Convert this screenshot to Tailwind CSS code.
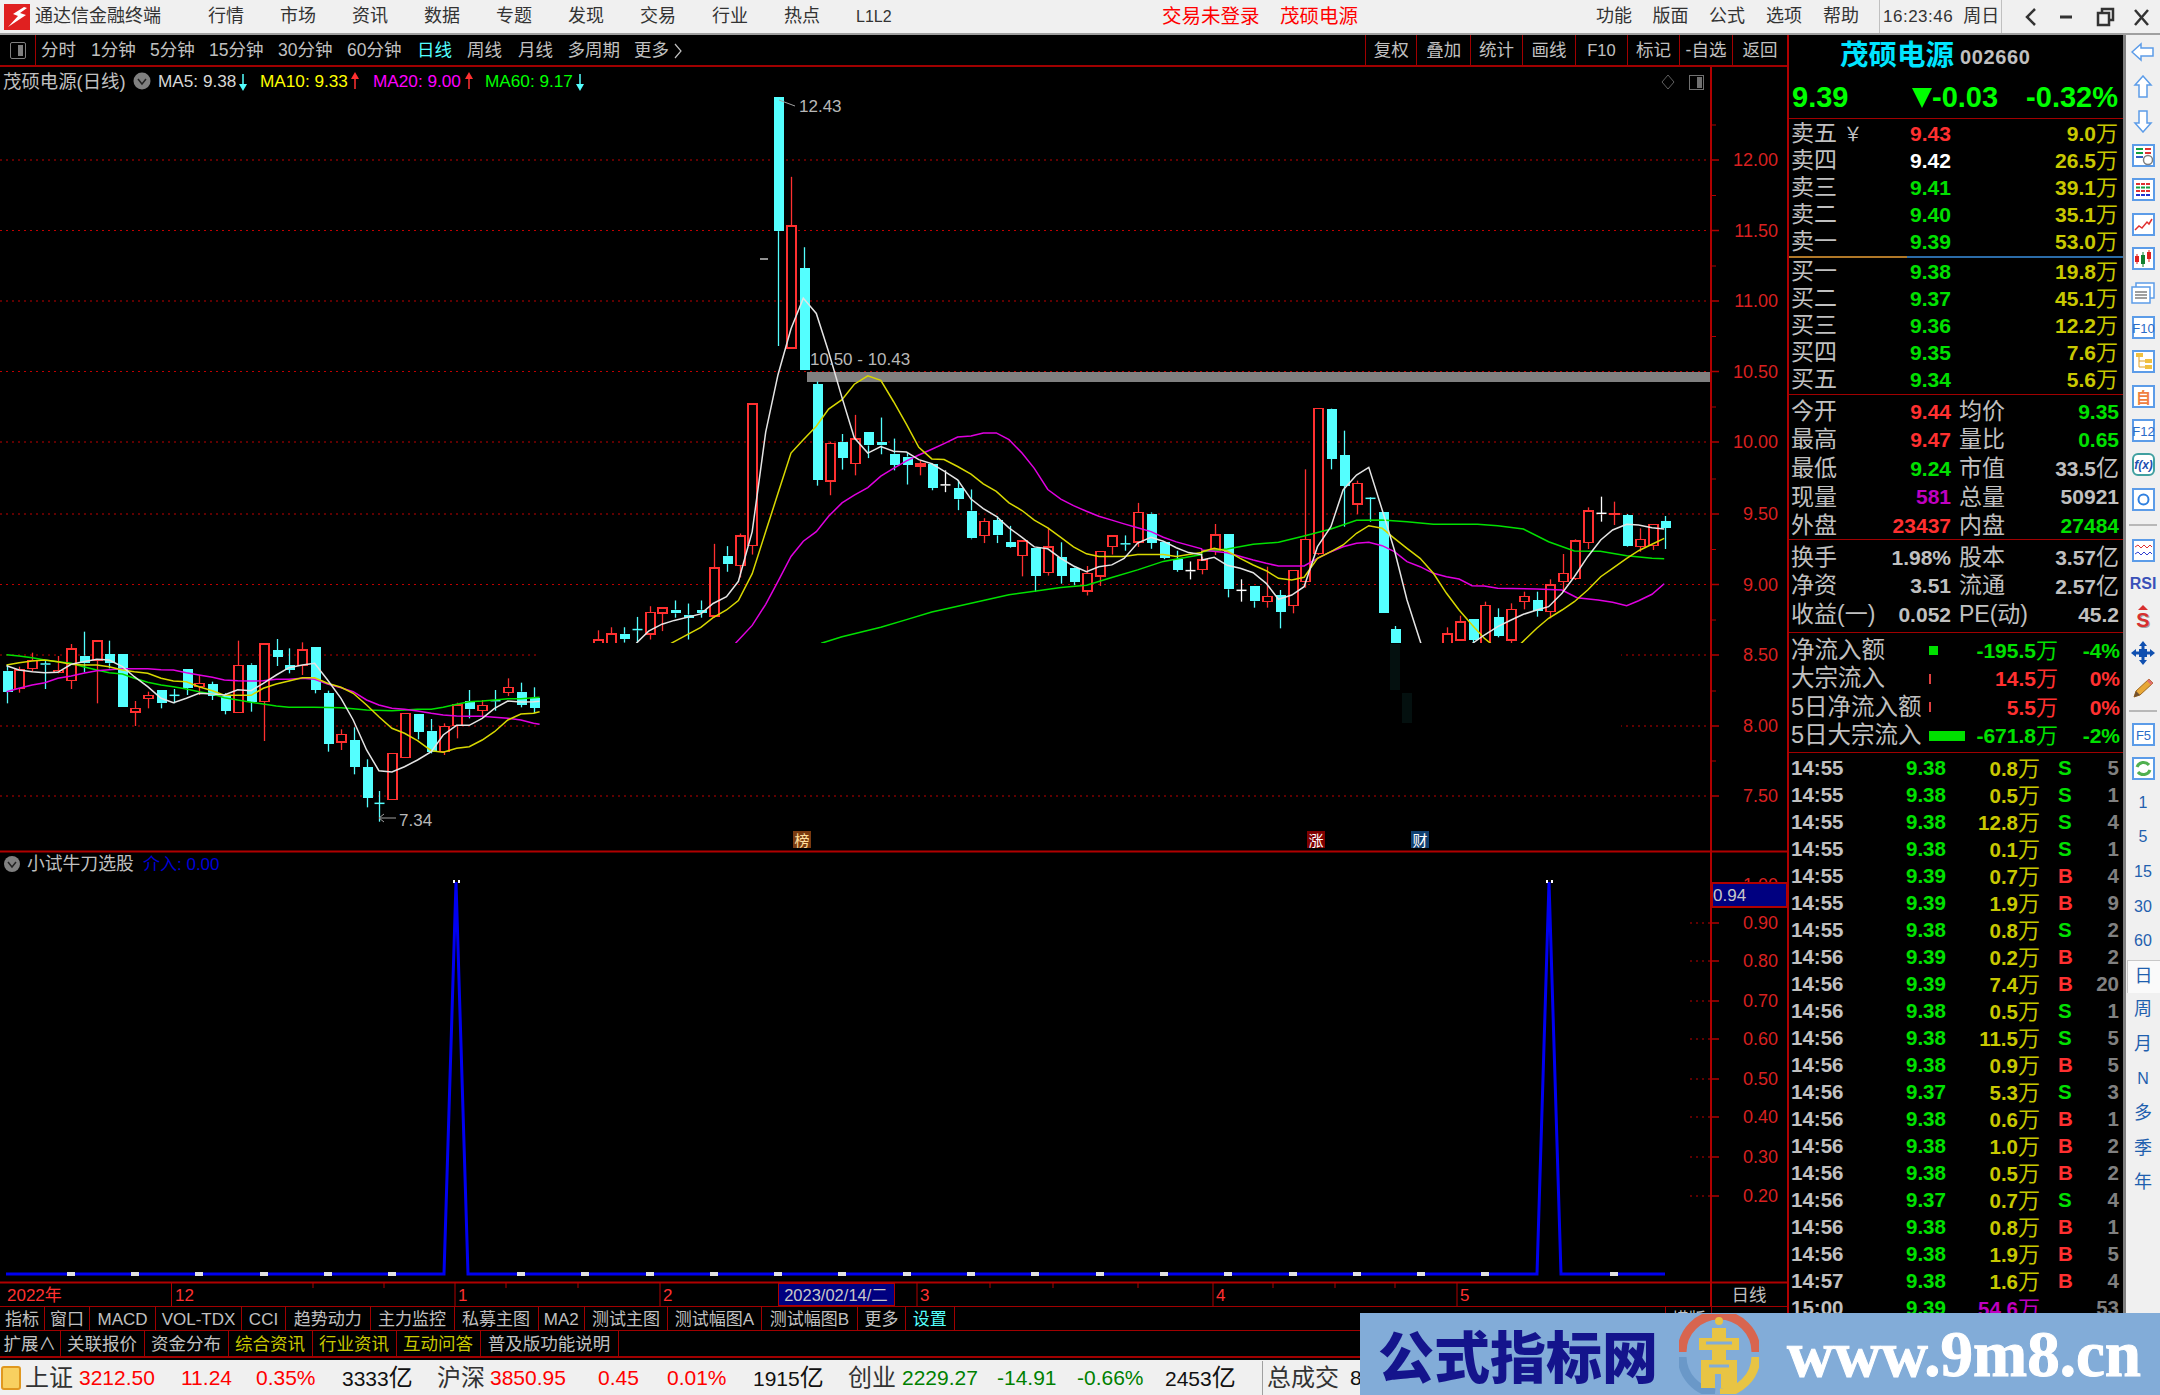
<!DOCTYPE html>
<html lang="zh">
<head>
  <meta charset="UTF-8">
  <title>通达信金融终端</title>
  <script src="https://cdn.jsdelivr.net/npm/@tailwindcss/browser@4"></script>
</head>
<body class="bg-black">
<div class="relative w-[2160px] h-[1395px] overflow-hidden flex flex-col font-['Liberation_Sans','Noto_Sans_CJK_SC',sans-serif]">

  <!-- title bar -->
  <div class="h-[35px] shrink-0 flex items-center bg-[#f0f0f0] border-b-2 border-[#a0a0a0] text-[#333333] text-[18px]">
    <svg class="w-[26px] h-[26px] ml-[4px] mr-[5px] shrink-0" viewBox="0 0 26 26">
      <rect width="26" height="26" fill="#e02020"/>
      <path d="M20 3 L9 10 L14 12 L4 23 L22 11 L16 9 L23 4 Z" fill="#ffffff"/>
    </svg>
    <span class="w-[173px] shrink-0">通达信金融终端</span>
    <span class="w-[72px] shrink-0">行情</span>
    <span class="w-[72px] shrink-0">市场</span>
    <span class="w-[72px] shrink-0">资讯</span>
    <span class="w-[72px] shrink-0">数据</span>
    <span class="w-[72px] shrink-0">专题</span>
    <span class="w-[72px] shrink-0">发现</span>
    <span class="w-[72px] shrink-0">交易</span>
    <span class="w-[72px] shrink-0">行业</span>
    <span class="w-[72px] shrink-0">热点</span>
    <span class="w-[306px] shrink-0 text-[16px]">L1L2</span>
    <span class="w-[118px] shrink-0 text-[19.5px] text-[#ff0000]">交易未登录</span>
    <span class="w-[316px] shrink-0 text-[19.5px] text-[#ff0000]">茂硕电源</span>
    <span class="w-[56.5px] shrink-0">功能</span>
    <span class="w-[56.5px] shrink-0">版面</span>
    <span class="w-[57px] shrink-0">公式</span>
    <span class="w-[57px] shrink-0">选项</span>
    <span class="w-[56px] shrink-0">帮助</span>
    <div class="w-[123px] h-full shrink-0 flex items-center gap-[10px] border-x border-[#c0c0c0] pl-[3px]">
      <span class="text-[17px] tracking-[0.5px]">16:23:46</span><span>周日</span>
    </div>
    <svg class="w-[158px] h-[26px] shrink-0" viewBox="0 0 158 26" fill="none" stroke="#333333" stroke-width="2.5">
      <path d="M33 5 L25 13 L33 21"/>
      <path d="M58 13 H70" stroke-width="3"/>
      <rect x="96" y="9" width="11" height="12"/><path d="M100 9 V5 H111 V16 H107"/>
      <path d="M133 6 L146 21 M146 6 L133 21"/>
    </svg>
  </div>

  <div class="flex-1 flex min-h-0">
    <!-- left column -->
    <div class="w-[1787px] shrink-0 flex flex-col">
      <!-- period toolbar -->
      <div class="h-[32px] shrink-0 flex items-center border-b-2 border-[#a00000] text-[17.5px] text-[#c0c0c0]">
        <div class="w-[36px] h-full shrink-0 flex items-center justify-center border-r border-[#a00000]">
          <div class="w-[16px] h-[17px] flex justify-end border border-[#808080] rounded-[2px] p-[2px]"><div class="w-[5px] bg-[#808080]"></div></div>
        </div>
        <div class="w-[55px] shrink-0 pl-[5px] pt-[1px]">分时</div>
        <div class="w-[59px] shrink-0 pt-[1px]">1分钟</div>
        <div class="w-[59px] shrink-0 pt-[1px]">5分钟</div>
        <div class="w-[69px] shrink-0 pt-[1px]">15分钟</div>
        <div class="w-[69px] shrink-0 pt-[1px]">30分钟</div>
        <div class="w-[70px] shrink-0 pt-[1px]">60分钟</div>
        <div class="w-[50px] shrink-0 pt-[1px] text-[#54ffff]">日线</div>
        <div class="w-[51px] shrink-0 pt-[1px]">周线</div>
        <div class="w-[49.6px] shrink-0 pt-[1px]">月线</div>
        <div class="w-[66.4px] shrink-0 pt-[1px]">多周期</div>
        <div class="w-[731px] shrink-0 pt-[1px] flex items-center gap-[5px]">更多<svg width="8" height="16" viewBox="0 0 8 16" fill="none" stroke="#c0c0c0" stroke-width="1.2"><path d="M1 1 L7 8 L1 15"/></svg></div>
        <div class="w-[51.5px] h-full shrink-0 flex items-center justify-center border-l border-[#a00000]">复权</div>
        <div class="w-[53.5px] h-full shrink-0 flex items-center justify-center border-l border-[#a00000]">叠加</div>
        <div class="w-[52px] h-full shrink-0 flex items-center justify-center border-l border-[#a00000]">统计</div>
        <div class="w-[53px] h-full shrink-0 flex items-center justify-center border-l border-[#a00000]">画线</div>
        <div class="w-[52px] h-full shrink-0 flex items-center justify-center border-l border-[#a00000] text-[16.5px]">F10</div>
        <div class="w-[52px] h-full shrink-0 flex items-center justify-center border-l border-[#a00000]">标记</div>
        <div class="w-[53px] h-full shrink-0 flex items-center justify-center border-l border-[#a00000]">-自选</div>
        <div class="w-[55px] h-full shrink-0 flex items-center justify-center border-l border-[#a00000]">返回</div>
      </div>

      <!-- kline + indicator canvas, coordinates are page pixels -->
      <svg id="chart" class="w-[1787px] h-[1239px] shrink-0 block" viewBox="0 67 1787 1239"></svg>

      <!-- function tabs -->
      <div id="tabs1" class="h-[25px] shrink-0 flex items-center border-y border-[#a00000] text-[17px] text-[#c0c0c0]"></div>
      <div id="tabs2" class="h-[27px] shrink-0 flex items-center border-b-2 border-[#a00000] text-[17.5px] text-[#c0c0c0]"></div>
      <div class="h-[2px] shrink-0 bg-black"></div>
    </div>

    <!-- quote panel -->
    <div class="w-[339px] shrink-0 flex flex-col border-l-2 border-r-[3px] border-l-[#b00000] border-r-[#808080] text-[#c0c0c0] overflow-hidden">
      <div class="h-[40px] shrink-0 flex items-center pl-[51px] gap-[6px]">
        <span class="text-[28.5px] font-bold text-[#00e4ff]">茂硕电源</span>
        <span class="text-[20px] font-bold tracking-[0.6px] mt-[4px]">002660</span>
      </div>
      <div class="h-[44px] shrink-0 flex items-center text-[#00ff00] font-bold text-[29px] border-b border-[#a00000] pt-[2px]">
        <span class="w-[123px] shrink-0 pl-[3px]">9.39</span>
        <svg class="w-[20px] h-[20px] shrink-0" viewBox="0 0 20 20"><path d="M0 0 H20 L10 20 Z" fill="#00ff00"/></svg>
        <span class="w-[88px] shrink-0">-0.03</span>
        <span class="flex-1 text-right pr-[5px]">-0.32%</span>
      </div>
      <div id="orders"></div>
      <div id="stats1" class="h-[146px] shrink-0 border-y border-[#a00000] pt-[2px]"></div>
      <div id="stats2" class="h-[93px] shrink-0 border-b border-[#a00000] pt-[3px]"></div>
      <div id="flows" class="h-[120px] shrink-0 border-b border-[#a00000] pt-[3px]"></div>
      <div id="ticks" class="pt-[2px]"></div>
    </div>

    <!-- right toolbar -->
    <div class="w-[34px] shrink-0 bg-[#f0f0f0] flex flex-col items-center text-[#1f5fae]">
      <div class="h-[34.4px] flex items-center"><svg width="24" height="20" viewBox="0 0 24 20"><path d="M1 10 L10 2 V6 H22 V14 H10 V18 Z" fill="#fff" stroke="#5c9ce8" stroke-width="1.5"/></svg></div>
      <div class="h-[34.4px] flex items-center"><svg width="20" height="24" viewBox="0 0 20 24"><path d="M10 1 L18 10 H14 V22 H6 V10 H2 Z" fill="#fff" stroke="#5c9ce8" stroke-width="1.5"/></svg></div>
      <div class="h-[34.4px] flex items-center"><svg width="20" height="24" viewBox="0 0 20 24"><path d="M10 23 L18 14 H14 V2 H6 V14 H2 Z" fill="#fff" stroke="#5c9ce8" stroke-width="1.5"/></svg></div>
      <div class="h-[34.4px] flex items-center"><svg width="23" height="23" viewBox="0 0 23 23"><rect x="1" y="1" width="21" height="21" fill="#fff" stroke="#5c9ce8" stroke-width="2"/><path d="M4 5 H11 M4 9 H11" stroke="#10a040" stroke-width="2"/><path d="M4 13 H11" stroke="#3060c0" stroke-width="2"/><path d="M13 5 H19 M13 9 H19" stroke="#e03030" stroke-width="2"/><circle cx="16" cy="16" r="4.5" fill="#fff" stroke="#808080" stroke-width="1.5"/></svg></div>
      <div class="h-[34.4px] flex items-center"><svg width="23" height="23" viewBox="0 0 23 23"><rect x="1" y="1" width="21" height="21" fill="#fff" stroke="#5c9ce8" stroke-width="2"/><path d="M4 6 H19 M4 13 H19" stroke="#e03030" stroke-width="2" stroke-dasharray="4 1"/><path d="M4 9.5 H19" stroke="#10a040" stroke-width="2" stroke-dasharray="4 1"/><path d="M4 17 H19" stroke="#2030d0" stroke-width="2" stroke-dasharray="4 1"/></svg></div>
      <div class="h-[34.4px] flex items-center"><svg width="23" height="23" viewBox="0 0 23 23"><rect x="1" y="1" width="21" height="21" fill="#fff" stroke="#5c9ce8" stroke-width="2"/><path d="M3 17 L7 13 L10 15 L15 9 L17 11 L20 6" fill="none" stroke="#e03030" stroke-width="1.5"/></svg></div>
      <div class="h-[34.4px] flex items-center"><svg width="23" height="23" viewBox="0 0 23 23"><rect x="1" y="1" width="21" height="21" fill="#fff" stroke="#5c9ce8" stroke-width="2"/><path d="M5 7 V17 M17 3 V15" stroke="#e02020"/><path d="M11 5 V20" stroke="#108030"/><rect x="3" y="9" width="4" height="6" fill="#e02020"/><rect x="9" y="8" width="4" height="9" fill="#108030"/><rect x="15" y="5" width="4" height="7" fill="#e02020"/></svg></div>
      <div class="h-[34.4px] flex items-center"><svg width="24" height="22" viewBox="0 0 24 22" fill="#fff" stroke="#5c9ce8" stroke-width="1.5"><rect x="5" y="1" width="18" height="15"/><rect x="1" y="5" width="18" height="16"/><path d="M4 10 H16 M4 13 H16 M4 16 H16" stroke="#808080"/></svg></div>
      <div class="h-[34.4px] flex items-center"><svg width="23" height="23" viewBox="0 0 23 23"><rect x="1" y="1" width="21" height="21" fill="#fff" stroke="#5c9ce8" stroke-width="2"/><text x="11.5" y="16.5" font-size="13" text-anchor="middle" fill="#2a6cc8">F10</text></svg></div>
      <div class="h-[34.4px] flex items-center"><svg width="23" height="23" viewBox="0 0 23 23"><rect x="1" y="1" width="21" height="21" fill="#fff" stroke="#5c9ce8" stroke-width="2"/><path d="M7 6 V17 H13 M7 11 H13" fill="none" stroke="#e0a020"/><rect x="4" y="3" width="7" height="4" fill="#f0c040"/><rect x="13" y="9" width="7" height="4" fill="#f0c040"/><rect x="13" y="15" width="7" height="4" fill="#f0c040"/></svg></div>
      <div class="h-[34.4px] flex items-center"><svg width="23" height="23" viewBox="0 0 23 23"><rect x="1" y="1" width="21" height="21" fill="#fff" stroke="#5c9ce8" stroke-width="2"/><text x="11.5" y="17.5" font-size="15" font-weight="bold" text-anchor="middle" fill="#f08040">自</text></svg></div>
      <div class="h-[34.4px] flex items-center"><svg width="23" height="23" viewBox="0 0 23 23"><rect x="1" y="1" width="21" height="21" fill="#fff" stroke="#5c9ce8" stroke-width="2"/><text x="11.5" y="16.5" font-size="13" text-anchor="middle" fill="#2a6cc8">F12</text></svg></div>
      <div class="h-[34.4px] flex items-center"><svg width="23" height="23" viewBox="0 0 23 23"><rect x="1" y="1" width="21" height="21" rx="5" fill="#fff" stroke="#40a0a0" stroke-width="2"/><text x="11.5" y="16" font-size="12" font-style="italic" font-weight="bold" text-anchor="middle" fill="#2050b0">f(x)</text></svg></div>
      <div class="h-[34.4px] flex items-center"><svg width="23" height="23" viewBox="0 0 23 23"><rect x="1" y="1" width="21" height="21" fill="#fff" stroke="#5c9ce8" stroke-width="2"/><circle cx="11.5" cy="11.5" r="5" fill="none" stroke="#3080e0" stroke-width="2"/></svg></div>
      <div class="h-[16.4px] shrink-0 flex items-center"><div class="w-[28px] h-[2px] bg-[#b8b8b8]"></div></div>
      <div class="h-[34.4px] flex items-center"><svg width="23" height="23" viewBox="0 0 23 23"><rect x="1" y="1" width="21" height="21" fill="#fff" stroke="#5c9ce8" stroke-width="2"/><path d="M3 8 L6 6 L9 9 L12 6 L15 9 L18 6 L20 8" fill="none" stroke="#e03030"/><path d="M3 15 L6 13 L9 16 L12 13 L15 16 L18 13 L20 15" fill="none" stroke="#3040d0"/></svg></div>
      <div class="h-[34.4px] flex items-center font-bold text-[16px] text-[#3a50b8]">RSI</div>
      <div class="h-[34.4px] flex items-center"><svg width="20" height="30" viewBox="0 0 20 30"><path d="M10 1 L15 6 H5 Z" fill="#d83030"/><text x="11" y="24" font-size="20" font-weight="bold" text-anchor="middle" fill="#a0a0a0">S</text><text x="10" y="23" font-size="20" font-weight="bold" text-anchor="middle" fill="#d83030">S</text></svg></div>
      <div class="h-[34.4px] flex items-center"><svg width="24" height="24" viewBox="0 0 24 24" fill="#1050b0"><path d="M12 0 L16 5 H8 Z M12 24 L16 19 H8 Z M0 12 L5 8 V16 Z M24 12 L19 8 V16 Z"/><rect x="8" y="8" width="8" height="8"/><path d="M12 4 V20 M4 12 H20" stroke="#1050b0" stroke-width="3"/></svg></div>
      <div class="h-[34.4px] flex items-center"><svg width="24" height="24" viewBox="0 0 24 24"><path d="M3 21 L5 15 L18 3 L22 7 L9 19 Z" fill="#e8a838" stroke="#a06820"/><path d="M3 21 L5 15 L9 19 Z" fill="#705030"/><path d="M18 3 L22 7 L20 9 L16 5 Z" fill="#e07070"/></svg></div>
      <div class="h-[12px] shrink-0 flex items-center"><div class="w-[28px] h-[2px] bg-[#b8b8b8]"></div></div>
      <div class="h-[34.4px] flex items-center"><svg width="23" height="23" viewBox="0 0 23 23"><rect x="1" y="1" width="21" height="21" fill="#fff" stroke="#5c9ce8" stroke-width="2"/><text x="11.5" y="16.5" font-size="13" text-anchor="middle" fill="#2a6cc8">F5</text></svg></div>
      <div class="h-[34.4px] flex items-center"><svg width="23" height="23" viewBox="0 0 23 23"><rect x="1" y="1" width="21" height="21" fill="#fff" stroke="#5c9ce8" stroke-width="2"/><path d="M5 10 A7 7 0 0 1 17 8 M18 13 A7 7 0 0 1 6 15" fill="none" stroke="#50b050" stroke-width="3"/></svg></div>
      <div class="h-[34.6px] flex items-center text-[16px]">1</div>
      <div class="h-[34.6px] flex items-center text-[16px]">5</div>
      <div class="h-[34.6px] flex items-center text-[16px]">15</div>
      <div class="h-[34.6px] flex items-center text-[16px]">30</div>
      <div class="h-[34.6px] flex items-center text-[16px]">60</div>
      <div class="h-[33px] w-[33px] mt-[1px] flex items-center justify-center text-[18px] bg-[#fafafa] border-t border-l border-[#c8c8c8]">日</div>
      <div class="h-[34.6px] flex items-center text-[18px]">周</div>
      <div class="h-[34.6px] flex items-center text-[18px]">月</div>
      <div class="h-[34.6px] flex items-center text-[16px]">N</div>
      <div class="h-[34.6px] flex items-center text-[18px]">多</div>
      <div class="h-[34.6px] flex items-center text-[18px]">季</div>
      <div class="h-[34.6px] flex items-center text-[18px]">年</div>
    </div>
  </div>

  <!-- index strip -->
  <div class="h-[35px] shrink-0 flex items-center bg-[#f0f0f0] text-[21px] font-medium whitespace-nowrap pt-[1px]">
    <div class="w-[25px] shrink-0 pl-[1px]"><div class="w-[20px] h-[24px] rounded-[3px] border-2 border-[#e09820] bg-[#f8d060]"></div></div>
    <div class="w-[54px] shrink-0 text-[24px] font-normal text-[#333333]">上证</div>
    <div class="w-[102px] shrink-0 text-[#ff0000]">3212.50</div>
    <div class="w-[75px] shrink-0 text-[#ff0000]">11.24</div>
    <div class="w-[86px] shrink-0 text-[#ff0000]">0.35%</div>
    <div class="w-[95px] shrink-0 text-[#111111]">3333<span class="text-[24px] font-normal">亿</span></div>
    <div class="w-[53px] shrink-0 text-[24px] font-normal text-[#333333]">沪深</div>
    <div class="w-[108px] shrink-0 text-[#ff0000]">3850.95</div>
    <div class="w-[69px] shrink-0 text-[#ff0000]">0.45</div>
    <div class="w-[86px] shrink-0 text-[#ff0000]">0.01%</div>
    <div class="w-[95px] shrink-0 text-[#111111]">1915<span class="text-[24px] font-normal">亿</span></div>
    <div class="w-[54px] shrink-0 text-[24px] font-normal text-[#333333]">创业</div>
    <div class="w-[95px] shrink-0 text-[#008000]">2229.27</div>
    <div class="w-[80px] shrink-0 text-[#008000]">-14.91</div>
    <div class="w-[88px] shrink-0 text-[#008000]">-0.66%</div>
    <div class="w-[97px] shrink-0 text-[#111111]">2453<span class="text-[24px] font-normal">亿</span></div>
    <div class="w-[88px] shrink-0 h-full flex items-center border-l border-[#a0a0a0] pl-[4px] text-[24px] font-normal text-[#333333]">总成交</div>
    <div class="shrink-0 text-[#111111]">8</div>
  </div>

  <!-- watermark banner over the corner -->
  <div class="absolute left-[1360px] top-[1313px] w-[800px] h-[82px] bg-[#82acd8] flex items-center">
    <div class="w-[320px] shrink-0 pl-[18px] text-[56px] leading-none font-black text-[#14148c] font-['Noto_Sans_CJK_SC',sans-serif]">公式指标网</div>
    <svg class="w-[80px] h-[80px] shrink-0 -ml-[1px]" viewBox="0 0 80 80">
      <path d="M3 38 A37 37 0 0 1 77 38" fill="none" stroke="#d8654f" stroke-width="9"/>
      <path d="M77 43 A37 37 0 0 1 41 79" fill="none" stroke="#e8c444" stroke-width="9"/>
      <path d="M3 43 A37 37 0 0 0 36 79" fill="none" stroke="#6a98c8" stroke-width="9"/>
      <circle cx="40" cy="7" r="4" fill="#e8c444"/>
      <path d="M33 14 H47 V24 H60 V36 H47 V46 H58 V74 H42 V60 H36 V74 H22 V46 H33 V36 H20 V24 H33 Z" fill="#e8c444"/>
      <path d="M27 29 H53 M30 52 H50" stroke="#82acd8" stroke-width="3"/>
    </svg>
    <div class="ml-[28px] text-[65px] leading-none font-bold text-white font-['Liberation_Serif',serif] [-webkit-text-stroke:1px_white]">www.9m8.cn</div>
  </div>
</div>

<script>
  const RED = '#b00000';
  const svg = document.getElementById('chart');
  let out = '';

  function line(x1, y1, x2, y2, color, w, extra) {
    out += `<line x1="${x1}" y1="${y1}" x2="${x2}" y2="${y2}" stroke="${color}" stroke-width="${w || 1}" ${extra || ''}/>`;
  }
  function box(x, y, w, h, fill, stroke, sw) {
    out += `<rect x="${x}" y="${y}" width="${w}" height="${h}" fill="${fill}" stroke="${stroke || 'none'}" stroke-width="${sw || 1}" shape-rendering="crispEdges"/>`;
  }
  function text(x, y, s, color, size, anchor) {
    out += `<text x="${x}" y="${y}" fill="${color}" font-size="${size}" text-anchor="${anchor || 'start'}" dominant-baseline="central">${s}</text>`;
  }

  // price grid
  [160, 230.5, 301, 371.5, 442, 514, 584.5, 655, 726, 796].forEach(y => {
    line(0, y, 1711, y, '#c00000', 1, 'stroke-dasharray="2 4"');
  });

  // support band sits under the candles and averages
  box(807, 372, 904, 9.5, '#808080');

  // zoomed-crop coordinate helpers, one per crop I read values from
  const L = y => 620 + y / 3;
  const M = y => 80 + y / 2.613;
  const R = y => 380 + y / 3;
  const X = i => Math.round(6.5 + 12.86 * i);

  function candle(c, f) {
    const [i, t, hi, top, bot, lo] = c;
    const x = X(i) + 0.5;
    const col = t === 'r' ? '#ff3030' : t === 'w' ? '#ffffff' : '#54ffff';
    line(x, f(hi), x, f(top), col, 1.3);
    line(x, f(bot), x, f(lo), col, 1.3);
    if (t === 'r') box(x - 4.5, f(top), 9, f(bot) - f(top), '#000000', col, 1.5);
    else if (t === 'x' || t === 'w') line(x - 5, f(top), x + 5, f(top), col, 1.5);
    else box(x - 5, f(top), 10, f(bot) - f(top), col);
  }

  const left = [[0,'c',133,152,215,250],[1,'r',140,150,205,218],[2,'r',98,122,146,155],[3,'x',120,132,135,207],[4,'r',108,152,158,160],[5,'r',72,87,182,207],[6,'c',35,107,130,157],[7,'r',60,63,120,250],[8,'c',62,103,130,145],[9,'c',103,103,260,260],[10,'r',243,266,276,318],[11,'r',215,226,236,265],[12,'c',210,211,250,265],[13,'x',207,226,228,250],[14,'c',148,148,203,225],[15,'r',165,190,200,225],[16,'c',185,193,228,240],[17,'c',220,228,273,283],[18,'r',62,136,277,277],[19,'c',130,134,245,275],[20,'r',70,72,245,363],[21,'c',57,90,110,138],[22,'c',85,135,150,160],[23,'r',67,90,137,165],[24,'c',80,80,210,220],[25,'c',212,220,372,395],[26,'r',328,343,366,390],[27,'c',322,360,440,463],[28,'c',418,441,534,562],[29,'x',513,550,551,605],[30,'r',400,400,538,538],[31,'r',280,280,412,412],[32,'c',283,283,336,358],[33,'c',297,332,395,400],[34,'r',310,320,395,405],[35,'r',248,255,317,355],[36,'c',210,243,268,295],[37,'r',240,257,272,290],[38,'x',210,242,244,272],[39,'r',175,203,218,228],[40,'c',188,215,255,262],[41,'c',202,233,263,280]];
  const mid = [[46,'r',1438,1463,1480,1480],[47,'r',1430,1447,1480,1480],[48,'c',1430,1447,1461,1470],[49,'x',1403,1436,1438,1470],[50,'r',1375,1392,1447,1462],[51,'r',1380,1380,1393,1440],[52,'c',1360,1384,1394,1405],[53,'c',1368,1397,1405,1462],[54,'c',1360,1384,1392,1405],[55,'r',1212,1275,1400,1405],[56,'c',1218,1243,1265,1285],[57,'r',1185,1192,1268,1300],[58,'r',847,847,1217,1240],[60,'c',45,45,395,695],[61,'r',253,381,700,700],[62,'c',437,492,758,758],[63,'c',788,795,1045,1060],[64,'r',945,950,1048,1085],[65,'c',925,945,987,1018],[66,'r',875,938,1002,1033],[67,'c',921,921,955,988],[68,'c',882,945,955,978],[69,'c',937,976,1006,1020],[70,'c',975,984,1006,1057],[71,'r',995,1004,1008,1033],[72,'c',1002,1004,1065,1072],[73,'w',1020,1058,1060,1077],[74,'c',1045,1066,1096,1124],[75,'c',1070,1125,1198,1200],[76,'r',1145,1153,1190,1210],[77,'c',1140,1150,1190,1210],[78,'c',1165,1207,1220,1222],[79,'r',1205,1205,1243,1297],[80,'c',1222,1222,1296,1337],[81,'r',1170,1220,1287,1295],[82,'c',1208,1247,1296,1316],[83,'c',1270,1274,1312,1320],[84,'r',1270,1290,1335,1347],[85,'r',1232,1232,1296,1322],[86,'r',1192,1192,1219,1240],[87,'x',1190,1212,1214,1230],[88,'r',1105,1130,1207,1220],[89,'c',1130,1133,1210,1225],[90,'c',1205,1207,1248,1252],[91,'c',1230,1252,1280,1285],[92,'w',1258,1282,1284,1305]];
  const right = [[93,'r',530,540,568,583],[94,'r',432,465,510,525],[95,'c',463,463,628,652],[96,'w',598,631,633,665],[97,'c',617,617,664,683],[98,'r',560,650,664,683],[99,'c',630,645,695,745],[100,'r',570,572,677,700],[101,'r',268,478,605,623],[102,'r',86,86,520,525],[103,'c',86,88,237,268],[104,'c',152,225,318,440],[105,'r',302,311,372,403],[106,'x',352,355,356,425],[107,'c',395,395,700,700],[108,'c',738,747,800,800],[112,'r',742,762,800,800],[113,'r',707,726,780,780],[114,'c',716,716,780,790],[115,'r',665,677,800,800],[116,'c',685,711,768,772],[117,'r',670,689,780,790],[118,'r',635,650,664,688],[119,'c',635,661,692,710],[120,'r',598,615,694,715],[121,'r',522,581,604,635],[122,'r',478,483,595,600],[123,'r',382,393,487,507],[124,'w',350,400,403,425],[125,'r',365,401,403,435],[126,'c',402,405,498,500],[127,'r',445,478,500,515],[128,'r',432,434,497,510],[129,'c',408,423,443,507]];
  left.forEach(c => candle(c, L));
  mid.forEach(c => candle(c, M));
  right.forEach(c => candle(c, R));
  line(760, 259, 768, 259, '#c0c0c0', 1.5);

  // moving averages; pairs are x,y read from the crops
  function ma(color, segs) {
    let pts = [];
    segs.forEach(([kind, arr]) => {
      for (let i = 0; i < arr.length; i += 2) {
        if (kind === 'L') pts.push([arr[i] / 2.613, L(arr[i + 1])]);
        if (kind === 'M') pts.push([560 + arr[i] / 2.45, M(arr[i + 1])]);
        if (kind === 'R') pts.push([1200 + arr[i] / 2.613, R(arr[i + 1])]);
      }
    });
    out += `<polyline points="${pts.map(p => p[0].toFixed(1) + ',' + p[1].toFixed(1)).join(' ')}" fill="none" stroke="${color}" stroke-width="1.5"/>`;
  }
  const W = '#e4e4e4', Y = '#d8d800', P = '#e000e0', G = '#00e000';
  ma(G, [['L',[17,104,50,108,84,113,117,120,151,125,186,130,218,140,253,150,285,158,320,162,351,175,386,187,421,195,453,200,487,207,520,215,555,222,586,233,621,240,656,247,688,252,722,258,755,262,820,262,891,263,923,266,958,270,1024,272,1091,268,1127,268,1158,262,1193,253,1226,245,1260,243,1292,240,1327,236,1361,236,1410,232]]]);
  ma(P, [['L',[17,215,50,205,84,195,117,188,151,175,186,168,218,160,253,152,285,149,320,146,351,146,386,146,421,149,453,150,487,158,520,165,555,172,586,180,621,182,656,183,688,182,722,178,755,178,790,175,822,178,856,192,891,203,923,215,958,240,990,255,1024,265,1057,268,1091,273,1127,280,1158,285,1193,288,1226,289,1260,289,1292,292,1327,295,1361,300,1394,310,1410,313]]]);
  ma(Y, [['L',[17,135,50,128,84,123,117,120,151,125,186,133,218,135,253,135,285,140,320,150,351,155,386,160,421,175,453,183,487,185,520,200,555,212,586,226,621,226,656,226,688,205,722,192,755,183,790,173,822,173,856,190,891,202,923,220,958,255,990,290,1024,325,1057,340,1091,362,1127,392,1158,397,1193,385,1226,380,1260,360,1292,335,1327,300,1361,282,1394,280,1410,275]]]);
  ma(W, [['L',[17,137,50,150,84,155,117,158,151,157,186,133,218,125,253,118,285,120,320,140,351,170,386,200,421,235,453,248,487,235,520,220,555,222,586,225,621,209,656,212,688,190,722,165,755,143,790,135,822,130,856,180,891,235,923,300,958,390,990,452,1024,456,1057,440,1091,420,1127,395,1158,345,1193,316,1226,316,1260,295,1292,265,1327,243,1361,246,1394,245,1410,244]]]);
  ma(G, [['M',[640,1472,691,1455,786,1430,849,1410,911,1390,974,1375,1037,1360,1100,1345,1162,1336,1227,1326,1290,1320,1352,1300,1415,1280,1478,1258,1572,1240]],['R',[5,515,71,507,139,493,205,487,272,468,342,447,409,421,476,420,541,425,610,433,725,433,778,437,845,447,911,485,978,513,1046,514,1115,527,1181,535,1213,536]]]);
  ma(P, [['M',[430,1472,471,1425,504,1370,534,1310,566,1245,596,1205,628,1180,658,1140,691,1105,721,1085,754,1065,786,1035,817,1015,849,995,879,980,911,965,941,950,974,933,1007,930,1037,922,1069,922,1100,940,1132,975,1162,1015,1195,1070,1227,1095,1258,1112,1290,1127,1320,1140,1352,1150,1382,1160,1415,1170,1448,1180,1478,1195,1510,1207,1572,1225]],['R',[5,510,71,518,139,540,173,550,205,558,272,558,307,535,342,515,374,500,409,490,441,487,476,497,508,515,541,545,575,560,610,580,644,590,677,597,711,617,743,618,778,625,880,627,946,630,985,653,1040,660,1078,667,1115,677,1146,662,1181,643,1213,611]]]);
  ma(Y, [['M',[272,1472,345,1430,375,1405,408,1385,437,1360,471,1290,504,1180,534,1080,566,975,596,940,628,905,658,860,691,835,721,795,754,773,786,785,817,840,849,900,879,960,911,990,941,992,974,1010,1007,1030,1037,1055,1069,1075,1100,1105,1132,1125,1162,1150,1195,1170,1227,1195,1258,1220,1290,1238,1320,1245,1352,1245,1382,1245,1415,1240,1448,1240,1478,1240,1510,1245,1540,1240,1572,1235]],['R',[5,515,37,505,71,513,105,535,139,555,173,572,205,595,240,600,272,592,307,535,342,515,374,495,409,460,441,437,476,445,508,475,541,505,575,535,610,580,644,640,677,690,711,735,743,775,770,800]]]);
  ma(Y, [['R',[830,800,880,745,911,715,946,690,978,665,1013,630,1047,590,1078,565,1115,535,1146,512,1181,493,1213,475]]]);
  ma(W, [['M',[187,1472,217,1440,250,1422,280,1412,345,1395,375,1368,408,1350,437,1310,471,1180,504,920,534,770,566,650,596,570,628,610,658,710,691,830,721,935,754,975,786,958,817,970,849,972,879,992,911,1003,941,1022,974,1045,1007,1095,1037,1120,1069,1140,1100,1170,1132,1195,1162,1220,1195,1225,1227,1250,1258,1270,1290,1285,1320,1272,1352,1267,1382,1250,1415,1210,1448,1195,1478,1205,1510,1222,1540,1235,1572,1240]],['R',[5,540,37,532,71,556,105,565,139,578,173,610,205,658,240,645,272,620,307,500,342,440,374,330,409,285,441,262,476,390,508,510,541,660,580,800]]]);
  ma(W, [['R',[700,800,743,765,778,740,813,720,845,703,880,690,911,680,946,640,978,590,1013,530,1047,480,1078,450,1115,433,1146,435,1181,443,1213,447]]]);

  // the lower part of the middle chart is blanked out in the picture
  box(540, 643, 1081, 120, '#000000');
  box(1390, 644, 10, 46, '#04100f');
  box(1402, 693, 10, 30, '#04100f');

  // price callouts
  text(810, 359, '10.50 - 10.43', '#b8b8b8', 17);
  text(799, 106, '12.43', '#b8b8b8', 17);
  line(779, 100, 795, 106, '#a0a0a0');
  text(399, 820, '7.34', '#b8b8b8', 17);
  line(379, 818, 396, 818, '#a0a0a0');
  line(379, 818, 384, 814, '#a0a0a0');
  line(379, 818, 384, 822, '#a0a0a0');

  // chart header
  text(3, 81, '茂硕电源(日线)', '#c0c0c0', 18.4);
  out += `<circle cx="142" cy="81" r="8.5" fill="#808080"/><path d="M138 79 L142 84 L146 79" fill="none" stroke="#222" stroke-width="1.5"/>`;
  text(158, 81, 'MA5: 9.38', '#d8d8d8', 17.2);
  text(260, 81, 'MA10: 9.33', '#ffff00', 17.2);
  text(373, 81, 'MA20: 9.00', '#ff00ff', 17.2);
  text(485, 81, 'MA60: 9.17', '#00ff00', 17.2);
  function arrow(x, up, color) {
    line(x, 74, x, 89, color, 1.5);
    out += up ? `<path d="M${x - 4} 79 L${x} 72 L${x + 4} 79 Z" fill="${color}"/>` : `<path d="M${x - 4} 84 L${x} 91 L${x + 4} 84 Z" fill="${color}"/>`;
  }
  arrow(243, false, '#54ffff');
  arrow(355, true, '#ff3030');
  arrow(469, true, '#ff3030');
  arrow(580, false, '#54ffff');
  out += `<path d="M1668 75 L1674 82 L1668 89 L1662 82 Z" fill="none" stroke="#606060"/>`;
  box(1689.5, 75.5, 14, 14, 'none', '#707070', 1.5);
  box(1697, 77, 5, 11, '#707070');

  // price axis
  [['12.00',160],['11.50',230.5],['11.00',301],['10.50',371.5],['10.00',442],['9.50',514],['9.00',584.5],['8.50',655],['8.00',726],['7.50',796]].forEach(([s, y]) => {
    text(1778, y, s, '#d82020', 18, 'end');
    line(1711, y, 1719, y, RED, 1.5);
    line(1711, y - 35, 1716, y - 35, RED, 1);
  });

  // event markers
  [[802, '榜', '#7a3a10', '#ffe0a0'], [1316, '涨', '#800000', '#ffffff'], [1420, '财', '#104070', '#ffffff']].forEach(([x, s, bg, fg]) => {
    box(x - 9, 831, 18, 17, bg);
    text(x, 840, s, fg, 15, 'middle');
  });

  // indicator pane
  line(0, 851.5, 1787, 851.5, RED, 2);
  out += `<circle cx="12" cy="864" r="8" fill="#808080"/><path d="M8 862 L12 867 L16 862" fill="none" stroke="#222" stroke-width="1.5"/>`;
  text(27, 864, '小试牛刀选股', '#c0c0c0', 17.8);
  text(143, 864, '介入: 0.00', '#0000d8', 17);
  [['1.00',885],['0.90',923],['0.80',961],['0.70',1001],['0.60',1039],['0.50',1079],['0.40',1117],['0.30',1157],['0.20',1196]].forEach(([s, y]) => {
    text(1778, y, s, '#d82020', 18, 'end');
    line(1711, y, 1719, y, RED, 1.5);
  });
  [923, 961, 1001, 1039, 1079, 1117, 1157, 1196].forEach(y => line(1690, y, 1711, y, '#c00000', 1, 'stroke-dasharray="2 4"'));
  box(1712, 883, 75, 24, '#000080', RED, 2);
  text(1713, 895, '0.94', '#c8c8c8', 17);
  out += `<polyline points="6,1274 444,1274 456,882 468,1274 1537,1274 1549,882 1561,1274 1665,1274" fill="none" stroke="#0000f0" stroke-width="3"/>`;
  for (let i = 5; i <= 125; i += 5) {
    const x = X(i);
    if (x < 440 || (x > 500 && x < 1500) || x > 1600) box(x - 4, 1272, 8, 4, '#e0e0e0');
  }
  box(453, 880, 2, 3, '#ffffff'); box(458, 880, 2, 3, '#ffffff');
  box(1546, 880, 2, 3, '#ffffff'); box(1551, 880, 2, 3, '#ffffff');

  // date axis
  line(0, 1282.5, 1787, 1282.5, RED, 2);
  [171.5, 455, 660, 917, 1213, 1457].forEach(x => line(x, 1283, x, 1306, RED, 1));
  [313, 384, 506, 578, 990, 1053, 1138, 1273, 1335, 1395].forEach(x => line(x, 1283, x, 1288, RED, 1));
  text(7, 1295, '2022年', '#ff3030', 17);
  text(175, 1295, '12', '#ff3030', 17);
  text(458, 1295, '1', '#ff3030', 17);
  text(663, 1295, '2', '#ff3030', 17);
  text(920, 1295, '3', '#ff3030', 17);
  text(1216, 1295, '4', '#ff3030', 17);
  text(1460, 1295, '5', '#ff3030', 17);
  box(778, 1283, 116, 22, '#000080', RED, 1);
  text(836, 1295, '2023/02/14/二', '#c8c8c8', 16.5, 'middle');
  text(1749, 1295, '日线', '#c0c0c0', 17.5, 'middle');

  // axes on top
  line(1711, 67, 1711, 1306, RED, 2);
  svg.innerHTML = out;

  // tabs
  const tabCell = 'shrink-0 h-full flex items-center justify-center border-r border-[#a00000] whitespace-nowrap pt-[2px]';
  const cell = (s, w, color) => `<div class="${tabCell} ${color || ''}" style="width:${w}px">${s}</div>`;
  document.getElementById('tabs1').innerHTML =
    [['指标',45],['窗口',45],['MACD',66],['VOL-TDX',86],['CCI',44],['趋势动力',84.5],['主力监控',84],['私募主图',84],['MA2',46.5],['测试主图',83],['测试幅图A',94],['测试幅图B',96],['更多',48],['设置',48.5,'text-[#54ffff]']]
      .map(t => cell(t[0], t[1], t[2])).join('') +
    `<div class="ml-auto w-[122px] h-full shrink-0 flex border-l border-[#a00000]"><div class="w-[46px] text-center border-r border-[#a00000]">横版</div></div>`;
  document.getElementById('tabs2').innerHTML =
    [['扩展∧',60.6],['关联报价',84],['资金分布',84],['综合资讯',84,'text-[#c8c800]'],['行业资讯',84,'text-[#c8c800]'],['互动问答',84,'text-[#c8c800]'],['普及版功能说明',138]]
      .map(t => cell(t[0], t[1], t[2])).join('');

  // quote panel
  const wan = '<span class="font-normal text-[22px]">万</span>';
  const green = 'text-[#00e000]', red = 'text-[#ff3030]', gray = 'text-[#c0c0c0]';
  const orderRow = (label, price, color, vol) =>
    `<div class="h-[27px] flex items-center"><span class="w-[121px] shrink-0 pl-[2px] text-[23px] leading-none whitespace-nowrap">${label}</span><span class="w-[60px] shrink-0 text-[21px] font-bold ${color}">${price}</span><span class="flex-1 text-right pr-[5px] text-[21px] font-bold text-[#c8c800] whitespace-nowrap">${vol}${wan}</span></div>`;
  const sells = [['卖五 <span class="text-[19px]">￥</span>','9.43',red,'9.0'],['卖四','9.42','text-white','26.5'],['卖三','9.41',green,'39.1'],['卖二','9.40',green,'35.1'],['卖一','9.39',green,'53.0']];
  const buys = [['买一','9.38',green,'19.8'],['买二','9.37',green,'45.1'],['买三','9.36',green,'12.2'],['买四','9.35',green,'7.6'],['买五','9.34',green,'5.6']];
  document.getElementById('orders').innerHTML =
    `<div class="pt-[1px]">${sells.map(r => orderRow(...r)).join('')}</div>` +
    `<div class="flex h-[2px] mt-[1px]"><div class="w-[118px] bg-[#b07828]"></div><div class="flex-1 bg-[#2b6ca8]"></div></div>` +
    `<div class="pb-[1px]">${buys.map(r => orderRow(...r)).join('')}</div>`;

  const statRow = (a, v1, c1, b, v2, c2, h) =>
    `<div class="flex items-center" style="height:${h}px"><span class="w-[92px] shrink-0 pl-[2px] text-[23px] leading-none whitespace-nowrap">${a}</span><span class="w-[70px] shrink-0 text-right text-[21px] font-bold ${c1}">${v1}</span><span class="w-[78px] shrink-0 pl-[8px] text-[23px] leading-none whitespace-nowrap">${b}</span><span class="flex-1 text-right pr-[4px] text-[21px] font-bold ${c2} whitespace-nowrap">${v2}</span></div>`;
  const yi = '<span class="font-normal text-[23px]">亿</span>';
  document.getElementById('stats1').innerHTML = [
    ['今开','9.44',red,'均价','9.35',green],
    ['最高','9.47',red,'量比','0.65',green],
    ['最低','9.24',green,'市值','33.5'+yi,gray],
    ['现量','581','text-[#c000c0]','总量','50921 ',gray],
    ['外盘','23437',red,'内盘','27484',green]
  ].map(r => statRow(...r, 28.6)).join('');
  document.getElementById('stats2').innerHTML = [
    ['换手','1.98%',gray,'股本','3.57'+yi,gray],
    ['净资','3.51',gray,'流通','2.57'+yi,gray],
    ['收益(一)','0.052',gray,'PE(动)','45.2',gray]
  ].map(r => statRow(...r, 28.6)).join('');

  const flowRow = (label, bar, val, color, pct) =>
    `<div class="h-[28.5px] flex items-center"><span class="w-[140px] shrink-0 pl-[2px] text-[23.5px] leading-none whitespace-nowrap">${label}</span><span class="w-[40px] shrink-0 flex items-center">${bar}</span><span class="w-[89px] shrink-0 text-right text-[21px] font-bold ${color} whitespace-nowrap">${val}${wan}</span><span class="flex-1 text-right pr-[3px] text-[21px] font-bold ${color}">${pct}</span></div>`;
  const tick = '<span class="w-[2px] h-[10px] bg-[#e04040]"></span>';
  document.getElementById('flows').innerHTML = [
    ['净流入额','<span class="w-[9px] h-[9px] bg-[#00e000]"></span>','-195.5',green,'-4%'],
    ['大宗流入',tick,'14.5',red,'0%'],
    ['5日净流入额',tick,'5.5',red,'0%'],
    ['5日大宗流入','<span class="w-[36px] h-[10px] bg-[#00e000]"></span>','-671.8',green,'-2%']
  ].map(r => flowRow(...r)).join('');

  // tick list
  const ticks = [['14:55','9.38','0.8','S','5'],['14:55','9.38','0.5','S','1'],['14:55','9.38','12.8','S','4'],['14:55','9.38','0.1','S','1'],['14:55','9.39','0.7','B','4'],['14:55','9.39','1.9','B','9'],['14:55','9.38','0.8','S','2'],['14:56','9.39','0.2','B','2'],['14:56','9.39','7.4','B','20'],['14:56','9.38','0.5','S','1'],['14:56','9.38','11.5','S','5'],['14:56','9.38','0.9','B','5'],['14:56','9.37','5.3','S','3'],['14:56','9.38','0.6','B','1'],['14:56','9.38','1.0','B','2'],['14:56','9.38','0.5','B','2'],['14:56','9.37','0.7','S','4'],['14:56','9.38','0.8','B','1'],['14:56','9.38','1.9','B','5'],['14:57','9.38','1.6','B','4'],['15:00','9.39','54.6','','53']];
  document.getElementById('ticks').innerHTML = ticks.map(([t, p, v, s, n]) => {
    const volColor = t === '15:00' ? 'text-[#c000c0]' : 'text-[#c8c800]';
    const sideColor = s === 'B' ? 'text-[#ff3030]' : 'text-[#00e000]';
    return `<div class="h-[27px] flex items-center text-[20.5px] font-bold"><span class="w-[117px] shrink-0 pl-[2px]">${t}</span><span class="w-[62px] shrink-0 ${green}">${p}</span><span class="w-[72px] shrink-0 text-right ${volColor} whitespace-nowrap">${v}<span class="font-normal text-[22px]">万</span></span><span class="w-[31px] shrink-0 pl-[18px] ${sideColor}">${s}</span><span class="flex-1 text-right pr-[4px] text-[#808080]">${n}</span></div>`;
  }).join('');
</script>
</body>
</html>
